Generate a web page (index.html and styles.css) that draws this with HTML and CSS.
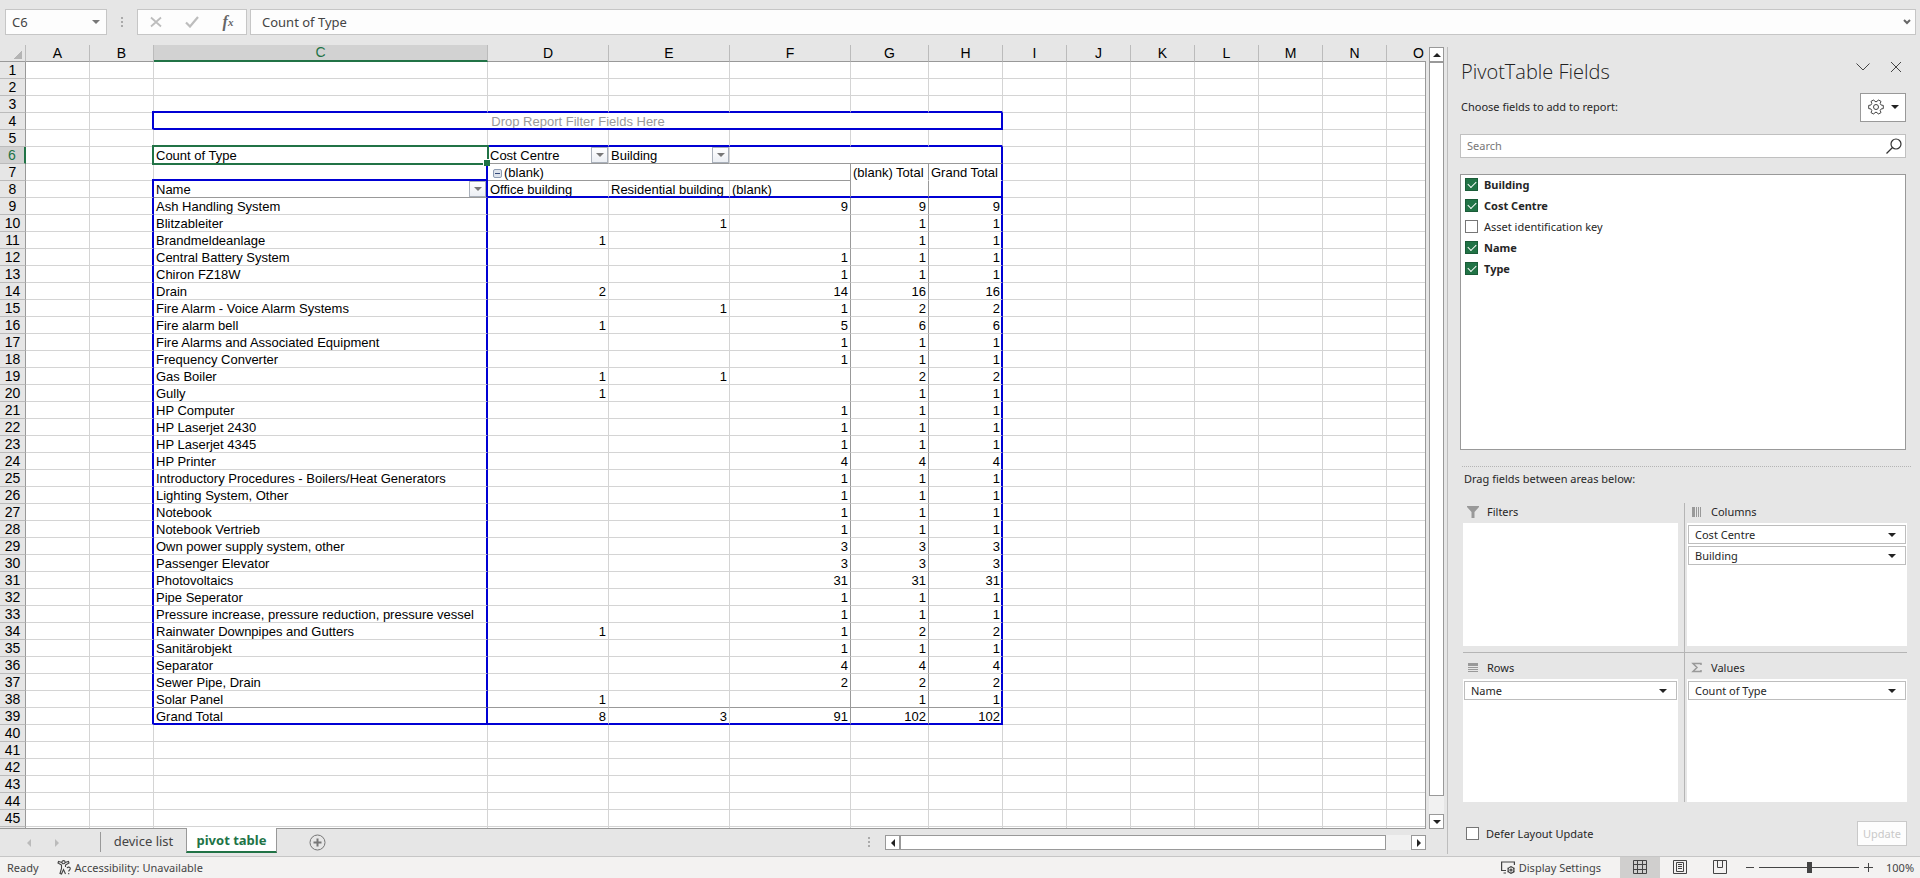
FILE: index.html
```html
<!DOCTYPE html>
<html lang="en">
<head>
<meta charset="utf-8">
<title>pivot table</title>
<link rel="stylesheet" href="styles.css">
</head>
<body>
<div class="app">
  <header class="formula-bar">
    <button class="name-box" type="button" aria-label="Name Box"><span>C6</span><i class="caret caret-gray"></i></button>
    <span class="grip"></span>
    <div class="fx-tools">
      <button type="button" aria-label="Cancel"><svg width="12" height="12" viewBox="0 0 12 12"><path d="M1 1.500 11 10.500M11 1.500 1 10.500" stroke="#bdbdbd" stroke-width="1.800" fill="none"/></svg></button>
      <button type="button" aria-label="Enter"><svg width="14" height="12" viewBox="0 0 14 12"><path d="M1 6.500 5 10.500 13 1" stroke="#bdbdbd" stroke-width="2.200" fill="none"/></svg></button>
      <button type="button" aria-label="Insert Function" class="fx"><i>f</i><sub>x</sub></button>
    </div>
    <div class="formula-input"><input type="text" value="Count of Type" aria-label="Formula"><svg width="8" height="6" viewBox="0 0 8 6"><path d="M1 1 4 4 7 1" stroke="#666" stroke-width="2" fill="none"/></svg></div>
  </header>

  <div class="workspace">
    <main class="book">
      <div class="sheet-row">
        <div class="sheet">
          <table class="grid">
            <colgroup><col class="w-head"><col class="w-std"><col class="w-std"><col class="w-name"><col class="w-wide"><col class="w-wide"><col class="w-wide"><col class="w-g"><col class="w-h"><col class="w-std"><col class="w-std"><col class="w-std"><col class="w-std"><col class="w-std"><col class="w-std"><col class="w-std"></colgroup>
            <thead><tr id="letters"></tr></thead>
            <tbody id="cells"></tbody>
          </table>
        </div>
        <div class="vscroll">
          <button type="button" aria-label="Scroll up"><i class="tri up"></i></button>
          <div class="vtrack"><div class="vthumb"></div></div>
          <button type="button" aria-label="Scroll down"><i class="tri down"></i></button>
        </div>
      </div>
      <nav class="tabs">
        <div class="tab-arrows"><i class="tri left pale"></i><i class="tri right pale"></i></div>
        <button type="button" class="tab">device list</button>
        <button type="button" class="tab active">pivot table</button>
        <button type="button" class="add" aria-label="New sheet"><svg width="17" height="17" viewBox="0 0 17 17"><circle cx="8.500" cy="8.500" r="7.500" fill="none" stroke="#767676"/><path d="M4.500 8.500h8M8.500 4.500v8" stroke="#767676" stroke-width="2"/></svg></button>
        <span class="grip small"></span>
        <div class="hscroll">
          <button type="button" aria-label="Scroll left"><i class="tri left"></i></button>
          <div class="htrack"><div class="hthumb"></div></div>
          <button type="button" aria-label="Scroll right"><i class="tri right"></i></button>
        </div>
      </nav>
    </main>

    <aside class="panel">
      <div class="panel-head">
        <h1>PivotTable Fields</h1>
        <button type="button" aria-label="Task pane options"><svg width="14" height="8" viewBox="0 0 14 8"><path d="M.5.500 7 7 13.500.5" stroke="#444" fill="none"/></svg></button>
        <button type="button" aria-label="Close"><svg width="12" height="12" viewBox="0 0 12 12"><path d="M1 1 11 11M11 1 1 11" stroke="#444" fill="none"/></svg></button>
      </div>
      <div class="choose">
        <span>Choose fields to add to report:</span>
        <button type="button" aria-label="Tools"><svg width="16" height="16" viewBox="0 0 16 16" fill="none" stroke="#444"><path d="M13.200 6.100 15.300 6.400V9.600L13.200 9.900 12.200 11.500 13 13.600 10.300 15.100 9 13.400H7L5.700 15.100 3 13.600 3.800 11.500 2.800 9.900.7 9.600V6.400L2.800 6.100 3.800 4.500 3 2.400 5.700.9 7 2.600H9L10.300.9 13 2.400 12.200 4.500Z"/><circle cx="8" cy="8" r="2.500"/></svg><i class="caret"></i></button>
      </div>
      <div class="search"><input type="text" placeholder="Search" aria-label="Search"><svg width="16" height="16" viewBox="0 0 16 16" fill="none" stroke="#333" stroke-width="1.200"><circle cx="10" cy="6" r="5"/><path d="M6.500 9.500.5 15.500"/></svg></div>
      <div class="fields">
        <label class="on"><input type="checkbox" checked>Building</label>
        <label class="on"><input type="checkbox" checked>Cost Centre</label>
        <label><input type="checkbox">Asset identification key</label>
        <label class="on"><input type="checkbox" checked>Name</label>
        <label class="on"><input type="checkbox" checked>Type</label>
      </div>
      <div class="drag">Drag fields between areas below:</div>
      <div class="areas">
        <section class="area">
          <h2><svg width="12" height="12" viewBox="0 0 12 12"><path d="M0 0H12V1L7.500 6V12H4.500V6L0 1Z" fill="#999"/></svg>Filters</h2>
          <div class="drop"></div>
        </section>
        <section class="area right">
          <h2><svg width="12" height="12" viewBox="0 0 12 12"><path d="M1 1H4V11H1ZM5 1H6V11H5ZM7 1H8V11H7ZM9 1H10V11H9Z" fill="#999"/></svg>Columns</h2>
          <div class="drop"><button type="button">Cost Centre<i class="caret"></i></button><button type="button">Building<i class="caret"></i></button></div>
        </section>
        <section class="area low">
          <h2><svg width="12" height="12" viewBox="0 0 12 12"><path d="M1 1H11V4H1ZM1 5H11V6H1ZM1 7H11V8H1ZM1 9H11V10H1Z" fill="#999"/></svg>Rows</h2>
          <div class="drop"><button type="button">Name<i class="caret"></i></button></div>
        </section>
        <section class="area right low">
          <h2><svg width="12" height="12" viewBox="0 0 12 12"><path d="M10 3V1.500H2L6 5.500 2 9.500H10V8" fill="none" stroke="#999" stroke-width="1.500"/></svg>Values</h2>
          <div class="drop"><button type="button">Count of Type<i class="caret"></i></button></div>
        </section>
      </div>
      <div class="defer"><label><input type="checkbox">Defer Layout Update</label><button type="button" disabled>Update</button></div>
    </aside>
  </div>

  <footer class="status">
    <span class="ready">Ready</span>
    <svg width="15" height="15" viewBox="0 0 15 15" fill="none" stroke="#444" stroke-width="1.100"><circle cx="6.500" cy="2.200" r="1.600"/><path d="M5 2.500 1.500 1.500 1 3 4.500 5V8.500L3 13.500 4.500 14 6.500 9.500 8.500 14M8 2.500 11.500 1.500 12 3 8.500 5V7M10 8.200C10.500 6.500 13.500 6.800 13.300 8.800 13.200 10 11.700 10 11.700 11.500M11.700 13V14.200"/></svg>
    <span class="access">Accessibility: Unavailable</span>
    <svg class="disp" width="15" height="14" viewBox="0 0 15 14" fill="none" stroke="#444" stroke-width="1.200"><path d="M5 9.500H.6V1H13.400V4M2.500 12H5"/><circle cx="10" cy="9" r="3"/><circle cx="10" cy="9" r="1"/><path d="M10 5V6M10 12V13M6.500 7 7.500 7.500M12.500 10.500 13.500 11M6.500 11 7.500 10.500M12.500 7.500 13.500 7"/></svg>
    <span>Display Settings</span>
    <button type="button" class="view current" aria-label="Normal"><svg width="14" height="14" viewBox="0 0 14 14" fill="none" stroke="#444"><path d="M.5.500H13.500V13.500H.5ZM4.500.5V13.500M9.500.5V13.500M.5 4.500H13.500M.5 9.500H13.500"/></svg></button>
    <button type="button" class="view" aria-label="Page Layout"><svg width="14" height="14" viewBox="0 0 14 14" fill="none" stroke="#444"><path d="M.5.500H13.500V13.500H.5ZM3.500 2.500H10.500V11.500H3.500ZM5 4.500H9M5 6.500H9M5 8.500H9"/></svg></button>
    <button type="button" class="view" aria-label="Page Break Preview"><svg width="14" height="14" viewBox="0 0 14 14" fill="none" stroke="#444"><path d="M.5.500H13.500V13.500H.5ZM4.500.5V7.500H9.500M9.500.5V7.500"/></svg></button>
    <div class="zoom"><span class="minus"></span><input type="range" min="0" max="100" value="50" aria-label="Zoom"><span class="plus"></span></div>
    <span class="pct">100%</span>
  </footer>
</div>
<script src="script.js"></script>
</body>
</html>
```
FILE: styles.css
```css
* { box-sizing: border-box; }
body { margin: 0; background: #e6e6e6; font: 11px/16px "Noto Sans", sans-serif; color: #262626; overflow: hidden; }
button, input { font: inherit; color: inherit; }
button { padding: 0; border: 0; background: none; }
svg { display: block; flex: none; }
.app { display: flex; flex-direction: column; height: 100vh; }

.caret { width: 0; height: 0; border: 4px solid transparent; border-top-color: #222; border-bottom: 0; flex: none; }
.caret-gray { border-top-color: #777; }
.tri { width: 0; height: 0; border: 4px solid transparent; }
.tri.up { border-bottom-color: #222; border-top: 0; }
.tri.down { border-top-color: #222; border-bottom: 0; }
.tri.left { border-right-color: #222; border-left: 0; }
.tri.right { border-left-color: #222; border-right: 0; }
.tri.left.pale { border-right-color: #bbb; }
.tri.right.pale { border-left-color: #bbb; }
.grip { width: 2px; height: 10px; background: repeating-linear-gradient(#aaa 0 2px, transparent 2px 4px); }

/* formula bar */
.formula-bar { display: flex; align-items: center; height: 45px; padding: 0 4px 1px 5px; font-size: 13px; color: #444; flex: none; }
.name-box { display: flex; align-items: center; justify-content: space-between; width: 102px; height: 26px; padding: 0 6px; border: 1px solid #c6c6c6; background: #fdfdfd; }
.formula-bar .grip { margin: 0 14px; }
.fx-tools { display: flex; width: 110px; height: 26px; padding: 0 0 1px; border: 1px solid #c6c6c6; background: #fdfdfd; }
.fx-tools button { flex: 1; display: flex; align-items: center; justify-content: center; }
.fx { font: italic bold 16px/16px "Liberation Serif", serif; color: #666; }
.fx sub { font-size: 11px; }
.formula-input { flex: 1; display: flex; align-items: center; height: 26px; margin-left: 3px; padding: 0 4px 0 11px; border: 1px solid #c6c6c6; background: #fdfdfd; }
.formula-input input { flex: 1; border: 0; padding: 0; background: none; outline: 0; }

.workspace { flex: 1; display: flex; min-height: 0; }
.book { flex: 1; min-width: 0; display: flex; flex-direction: column; }
.sheet-row { flex: 1; min-height: 0; display: flex; }
.sheet { flex: 1; overflow: hidden; position: relative; background: linear-gradient(#e6e6e6 17px, #fff 17px); border-bottom: 1px solid #999; }
.sheet::after { content: ""; position: absolute; top: 16px; right: 0; bottom: 0; width: 1px; background: #999; }

/* grid */
.grid { width: 1451px; table-layout: fixed; border-collapse: separate; border-spacing: 0; font: 13px/16px "Liberation Sans", Arial, sans-serif; color: #000; }
.w-head { width: 26px; }
.w-std { width: 64px; }
.w-name { width: 334px; }
.w-wide { width: 121px; }
.w-g { width: 78px; }
.w-h { width: 74px; }
.grid th { height: 17px; padding: 0; font-weight: normal; font-size: 14px; line-height: 16px; background: #e6e6e6; border-bottom: 1px solid #999; border-right: 1px solid #bbb; }
.grid tbody th { border-right-color: #999; border-bottom-color: #bbb; }
.grid th.picked { background: #d2d2d2; color: #217346; }
.grid thead th.picked { border-bottom: 2px solid #217346; line-height: 15px; }
.grid tbody th.picked { border-right: 2px solid #217346; }
.grid .all { border-right-color: #bbb; }
.grid .all i { display: block; width: 9px; height: 9px; margin: 2px 3px 0 auto; background: linear-gradient(135deg, transparent 50%, #b4b4b4 50%); }
.grid td { height: 17px; padding: 2px 2px 0; line-height: 14px; border-right: 1px solid #d4d4d4; border-bottom: 1px solid #d4d4d4; white-space: nowrap; overflow: hidden; position: relative; background: #fff; }
.grid td.b2 { border-bottom: 2px solid #0000d4; padding-top: 3px; line-height: 12px; }
.grid td.r2 { border-right: 2px solid #0000d4; padding-right: 1px; }
.grid td.bg { border-bottom-color: #999; }
.grid td.rg { border-right-color: #999; }
.grid td.b0 { border-bottom-color: #fff; }
.grid td.num { text-align: right; padding-right: 2px; }
.grid td.num.r2 { padding-right: 1px; }
.grid td.hint { text-align: center; color: #999; }
.grid td.corner, .grid td.sel { overflow: visible; }
.grid td.corner::after { content: ""; position: absolute; right: -1px; bottom: -1px; width: 2px; height: 2px; background: #0000d4; }
.grid td.sel { z-index: 2; }
.grid td.sel::before { content: ""; position: absolute; left: -2px; top: -2px; right: -2px; bottom: -2px; border: 2px solid #217346; }
.grid td.sel::after { content: ""; position: absolute; right: -3px; bottom: -3px; width: 6px; height: 6px; background: #217346; border: solid #fff; border-width: 1px 0 0 1px; }
.pick { position: absolute; top: 0; right: 0; width: 17px; height: 16px; display: flex; align-items: center; justify-content: center; border: 1px solid #a9b0ba; background: linear-gradient(#fff, #eceff4); }
.fold { display: inline-block; width: 9px; height: 9px; margin: 0 2px 0 3px; border: 1px solid #8d9cb3; border-radius: 2px; background: linear-gradient(#34497a, #34497a) center / 5px 1px no-repeat #dde3ec; }

/* scroll bars */
.vscroll { width: 15px; margin: 2px 3px 0 3px; display: flex; flex-direction: column; flex: none; }
.vscroll button, .hscroll button { width: 15px; height: 15px; flex: none; display: flex; align-items: center; justify-content: center; border: 1px solid #999; background: #fff; }
.vtrack { flex: 1; background: #f1f1f1; padding-bottom: 18px; }
.vthumb { height: 100%; border: 1px solid #999; background: #fff; }
.tabs { height: 27px; display: flex; align-items: flex-start; font-size: 13px; color: #444; flex: none; padding-right: 21px; }
.tab-arrows { display: flex; gap: 24px; width: 101px; height: 20px; margin-top: 3px; padding: 7px 0 0 27px; border-right: 1px solid #999; }
.tab { width: 85px; height: 24px; }
.tab.active { width: 91px; margin-top: -1px; height: 25px; background: #fff; color: #217346; font-weight: bold; border: 1px solid #999; border-top: 0; border-bottom: 2px solid #217346; position: relative; }
.add { margin: 5px auto 0 32px; }
.grip.small { margin: 8px 15px 0 0; }
.hscroll { width: 541px; display: flex; margin-top: 6px; }
.htrack { flex: 1; background: #f1f1f1; padding-right: 25px; }
.hthumb { height: 15px; border: 1px solid #999; background: #fff; }

/* field panel */
.panel { width: 473px; margin: 2px 0 2px; padding: 0 13px 8px 12px; border-left: 1px solid #bdbdbd; display: flex; flex-direction: column; flex: none; }
.panel-head { display: flex; align-items: center; height: 45px; gap: 20px; padding: 0 5px 4px 1px; }
.panel-head button { padding-bottom: 1px; }
.panel-head h1 { flex: 1; margin: 8px 0 0; font: 300 20px/28px "Open Sans", "Noto Sans", sans-serif; color: #222; }
.choose { display: flex; justify-content: space-between; align-items: center; height: 30px; padding-left: 1px; margin-right: 1px; }
.choose button { width: 46px; height: 29px; display: flex; align-items: center; justify-content: center; gap: 7px; background: #fff; border: 1px solid #999; }
.search { display: flex; align-items: center; height: 24px; margin: 12px 1px 16px 0; padding: 0 3px 0 6px; background: #fff; border: 1px solid #c0c0c0; }
.search input { flex: 1; border: 0; padding: 0; outline: 0; }
.search input::placeholder { color: #777; opacity: 1; }
.fields { height: 276px; margin-right: 1px; padding: 3px 4px; background: #fff; border: 1px solid #999; }
label { display: flex; align-items: center; gap: 6px; height: 21px; }
.fields label { padding-bottom: 8px; }
.on { font-weight: bold; }
input[type=checkbox] { appearance: none; width: 13px; height: 13px; margin: 0; border: 1px solid #767676; background: #fff; flex: none; }
input[type=checkbox]:checked { border-color: #1a5c38; background: #217346; position: relative; }
input[type=checkbox]:checked::after { content: ""; position: absolute; left: 2px; top: 2px; width: 7px; height: 4px; border: solid #fff; border-width: 0 0 1px 1px; rotate: -45deg; }
.drag { margin: 16px -4px 0 2px; padding: 4px 2px 0; height: 37px; border-top: 1px dotted #b5b5b5; }
.areas { flex: 1; display: grid; grid-template-columns: 222px 1fr; grid-template-rows: 149px 1fr; margin-left: 3px; }
.area { display: flex; flex-direction: column; padding: 0 6px 6px 0; border-right: 1px solid #b5b5b5; }
.area.right { padding: 0 0 6px 2px; border-right: 0; }
.area.low { border-top: 1px solid #b5b5b5; padding-bottom: 0; padding-top: 6px; }
.area h2 { display: flex; align-items: center; gap: 8px; height: 20px; margin: 0; padding: 0 0 2px 4px; font: inherit; }
.drop { flex: 1; display: flex; flex-direction: column; gap: 2px; padding: 2px 1px; background: #fff; }
.drop button { height: 19px; display: flex; align-items: center; justify-content: space-between; padding: 0 9px 0 6px; border: 1px solid #bdbdbd; }
.defer { display: flex; justify-content: space-between; align-items: center; height: 25px; margin-top: 19px; padding-left: 3px; }
.defer { padding-left: 6px; }
.defer label { gap: 7px; }
.defer button { width: 50px; height: 25px; border: 1px solid #c9c9c9; background: #fdfdfd; color: #c9c9c9; }

/* status bar */
.status { display: flex; align-items: center; height: 22px; padding: 0 6px 0 7px; background: #f3f2f1; border-top: 1px solid #c6c6c6; color: #444; flex: none; }
.ready { margin-right: 18px; }
.access { margin: 0 auto 0 3px; }
.disp { margin-right: 3px; }
.view { width: 40px; height: 21px; padding-bottom: 1px; display: flex; align-items: center; justify-content: center; }
.view.current { margin-left: 19px; background: #d0cfce; }
.zoom { display: flex; align-items: center; gap: 5px; margin: 0 13px 0 6px; }
.minus { width: 8px; height: 1px; background: #444; }
.plus { width: 9px; height: 9px; background: linear-gradient(#444, #444) center / 9px 1px no-repeat, linear-gradient(#444, #444) center / 1px 9px no-repeat; }
.zoom input { appearance: none; width: 100px; height: 12px; margin: 0; background: linear-gradient(#444, #444) center / 100% 1px no-repeat; }
.zoom input::-webkit-slider-thumb { appearance: none; width: 5px; height: 11px; background: #444; }
.pct { width: 28px; }
```
FILE: script.js
```js
const items = [
  ["Ash Handling System", "", "", 9, 9],
  ["Blitzableiter", "", 1, "", 1],
  ["Brandmeldeanlage", 1, "", "", 1],
  ["Central Battery System", "", "", 1, 1],
  ["Chiron FZ18W", "", "", 1, 1],
  ["Drain", 2, "", 14, 16],
  ["Fire Alarm - Voice Alarm Systems", "", 1, 1, 2],
  ["Fire alarm bell", 1, "", 5, 6],
  ["Fire Alarms and Associated Equipment", "", "", 1, 1],
  ["Frequency Converter", "", "", 1, 1],
  ["Gas Boiler", 1, 1, "", 2],
  ["Gully", 1, "", "", 1],
  ["HP Computer", "", "", 1, 1],
  ["HP Laserjet 2430", "", "", 1, 1],
  ["HP Laserjet 4345", "", "", 1, 1],
  ["HP Printer", "", "", 4, 4],
  ["Introductory Procedures - Boilers/Heat Generators", "", "", 1, 1],
  ["Lighting System, Other", "", "", 1, 1],
  ["Notebook", "", "", 1, 1],
  ["Notebook Vertrieb", "", "", 1, 1],
  ["Own power supply system, other", "", "", 3, 3],
  ["Passenger Elevator", "", "", 3, 3],
  ["Photovoltaics", "", "", 31, 31],
  ["Pipe Seperator", "", "", 1, 1],
  ["Pressure increase, pressure reduction, pressure vessel", "", "", 1, 1],
  ["Rainwater Downpipes and Gutters", 1, "", 1, 2],
  ["Sanitärobjekt", "", "", 1, 1],
  ["Separator", "", "", 4, 4],
  ["Sewer Pipe, Drain", "", "", 2, 2],
  ["Solar Panel", 1, "", "", 1],
  ["Grand Total", 8, 3, 91, 102]
];

const td = (cls = "", html = "", span = 1) => `<td class="${cls}" colspan="${span}">${html}</td>`;
const blank = (n, cls = "") => td(cls).repeat(n);
const pick = name => `<button type="button" class="pick" aria-label="Filter ${name}"><i class="caret caret-gray"></i></button>`;

function pivotCells(row) {
  if (row === 3) return blank(1) + td("corner") + blank(6, "b2");
  if (row === 4) return blank(1) + td("r2") + td("hint b2 r2", "Drop Report Filter Fields Here", 6);
  if (row === 5) return blank(3) + blank(5, "b2");
  if (row === 6) return blank(2) + td("sel", "Count of Type") + td("bg", "Cost Centre" + pick("Cost Centre")) +
    td("bg", "Building" + pick("Building")) + td("bg r2", "", 3);
  if (row === 7) return blank(1) + td("corner") + td("b2 r2") +
    td("bg rg", '<button type="button" class="fold" aria-label="Collapse"></button>(blank)', 3) +
    td("rg b0", "(blank) Total") + td("r2 b0", "Grand Total");
  if (row === 8) return blank(1) + td("r2") + td("bg r2", "Name" + pick("Name")) + td("b2", "Office building") +
    td("b2", "Residential building") + td("b2 rg", "(blank)") + td("b2 rg") + td("b2 r2");
  if (row >= 9 && row <= 39) {
    const [name, d, e, f, g] = items[row - 9];
    const end = row === 39 ? " b2" : row === 38 ? " bg" : "";
    return blank(1) + td("r2") + td("r2" + end, name) + td("num" + end, d) + td("num" + end, e) +
      td("num rg" + end, f) + td("num rg" + end, g) + td("num r2" + end, g);
  }
  return blank(8);
}

document.getElementById("letters").innerHTML = '<th class="all"><i></i></th>' +
  [..."ABCDEFGHIJKLMNO"].map(c => `<th class="${c === "C" ? "picked" : ""}">${c}</th>`).join("");

let html = "";
for (let r = 1; r <= 46; r++) {
  html += `<tr><th class="${r === 6 ? "picked" : ""}">${r < 46 ? r : ""}</th>${pivotCells(r)}${blank(7)}</tr>`;
}
document.getElementById("cells").innerHTML = html;
```
